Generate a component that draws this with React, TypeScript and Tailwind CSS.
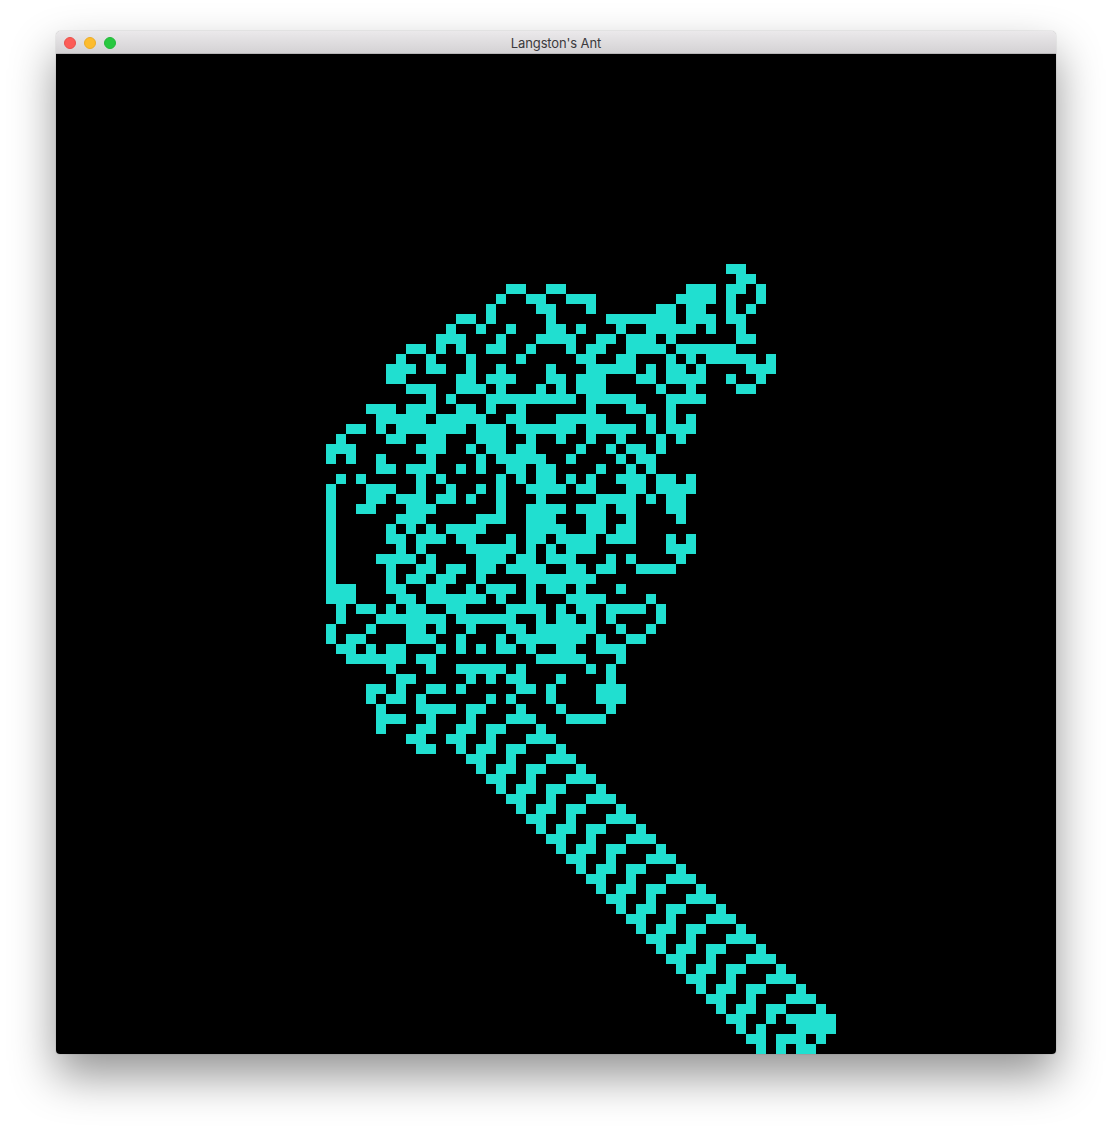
import React, { useMemo } from 'react';

const GRID = 100;

// Langton's ant, runs until it walks off the grid
function simulate(): Set<number> {
  const cells = new Set<number>();
  let x = 49;
  let y = 50;
  let dx = -1;
  let dy = 0;
  let steps = 0;
  while (x >= 0 && y >= 0 && x < GRID && y < GRID && steps < 100000) {
    const key = y * GRID + x;
    if (cells.has(key)) {
      cells.delete(key);
      [dx, dy] = [dy, -dx];
    } else {
      cells.add(key);
      [dx, dy] = [-dy, dx];
    }
    x += dx;
    y += dy;
    steps++;
  }
  return cells;
}

export default function App() {
  const path = useMemo(() => {
    let d = '';
    simulate().forEach((key) => {
      d += `M${(key % GRID) * 10} ${Math.floor(key / GRID) * 10}h10v10h-10z`;
    });
    return d;
  }, []);

  return (
    <div className="w-[1112px] h-[1134px] bg-white overflow-hidden pt-[31px] pl-[56px]">
      <div className="w-[1000px] rounded-t-[5px] rounded-b-[4px] overflow-hidden shadow-[0_22px_45px_rgba(0,0,0,0.42),0_0_1px_rgba(0,0,0,0.5)]">
        <div className="relative h-[23px] flex items-center justify-center bg-gradient-to-b from-[#ebe9eb] to-[#d4d2d4] border-b border-[#b8b6b8]">
          <div className="absolute left-[8px] top-[6px] flex gap-[8px]">
            <span className="w-3 h-3 rounded-full bg-[#fc5c57] border border-[#e9504b]" />
            <span className="w-3 h-3 rounded-full bg-[#fdbc2e] border border-[#ecac28]" />
            <span className="w-3 h-3 rounded-full bg-[#28c840] border border-[#24b93a]" />
          </div>
          <span className="mt-[3px] text-[13px] tracking-[-0.01em] leading-none text-[#3b3a3c] font-['Inter',sans-serif]">Langston's Ant</span>
        </div>
        <div className="w-[1000px] h-[1000px] bg-black">
          <svg width="1000" height="1000" viewBox="0 0 1000 1000" shapeRendering="crispEdges" className="block">
            <path d={path} fill="#20dfd0" />
          </svg>
        </div>
      </div>
    </div>
  );
}
